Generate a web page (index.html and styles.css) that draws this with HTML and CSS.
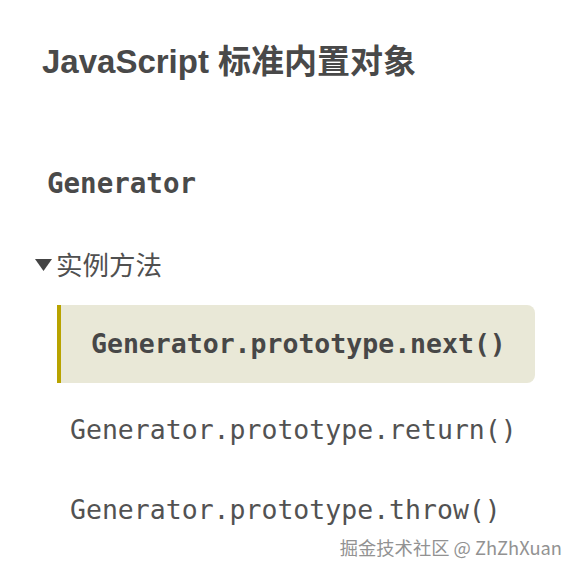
FILE: index.html
```html
<!DOCTYPE html>
<html lang="zh-CN">
<head>
<meta charset="utf-8">
<title>Generator</title>
<link rel="stylesheet" href="styles.css">
</head>
<body>
<main class="doc">
  <h1 class="title">JavaScript 标准内置对象</h1>
  <h2 class="obj">Generator</h2>
  <section class="group">
    <div class="group-head"><svg class="caret" width="17" height="14" viewBox="0 0 17 14"><polygon points="0,1 17,1 8.5,13" fill="#444"/></svg><span>实例方法</span></div>
    <ul class="methods">
      <li class="method active">Generator.prototype.next()</li>
      <li class="method second">Generator.prototype.return()</li>
      <li class="method third">Generator.prototype.throw()</li>
    </ul>
  </section>
  <div class="watermark">掘金技术社区 @ ZhZhXuan</div>
</main>
</body>
</html>
```

FILE: styles.css
```css
* { box-sizing: border-box; }
html, body { margin: 0; padding: 0; background: #fff; }
.doc {
  position: relative;
  width: 578px;
  height: 572px;
  overflow: hidden;
  padding-top: 42px;
  color: #4a4a4a;
  font-family: "Liberation Sans", "Noto Sans CJK SC", sans-serif;
}
.title {
  margin: 0 0 0 42px;
  font-size: 33px;
  line-height: 40px;
  font-weight: 700;
  color: #494949;
}
.obj {
  margin: 81px 0 0 47px;
  font-family: "DejaVu Sans Mono", monospace;
  font-size: 27.5px;
  line-height: 40px;
  font-weight: 700;
  color: #4a4a4a;
}
.group { margin-top: 41px; }
.group-head {
  display: flex;
  align-items: center;
  margin-left: 35px;
  height: 40px;
  font-family: "Noto Sans CJK SC", sans-serif;
  font-size: 26.5px;
  line-height: 40px;
  color: #505050;
}
.caret { margin-right: 4px; margin-top: 2px; }
.methods {
  list-style: none;
  margin: 21px 0 0 57px;
  padding: 0;
  width: 478px;
}
.method {
  height: 78px;
  padding-left: 13px;
  font-family: "DejaVu Sans Mono", monospace;
  font-size: 26.5px;
  line-height: 78px;
  color: #525252;
}
.method.second { margin-top: 8px; }
.method.third { margin-top: 2px; }
.method.active {
  padding-left: 30px;
  border-left: 4px solid #b8a300;
  border-radius: 0 8px 8px 0;
  background: #e9e8d7;
  font-weight: 700;
  color: #474747;
}
.watermark {
  position: absolute;
  right: 16px;
  top: 533px;
  font-family: "Noto Sans CJK SC", sans-serif;
  font-size: 18.3px;
  line-height: 28px;
  color: #929292;
  text-shadow: 0 0 1px #fff, 1px 1px 0 #fff, -1px -1px 0 #fff;
}
```
